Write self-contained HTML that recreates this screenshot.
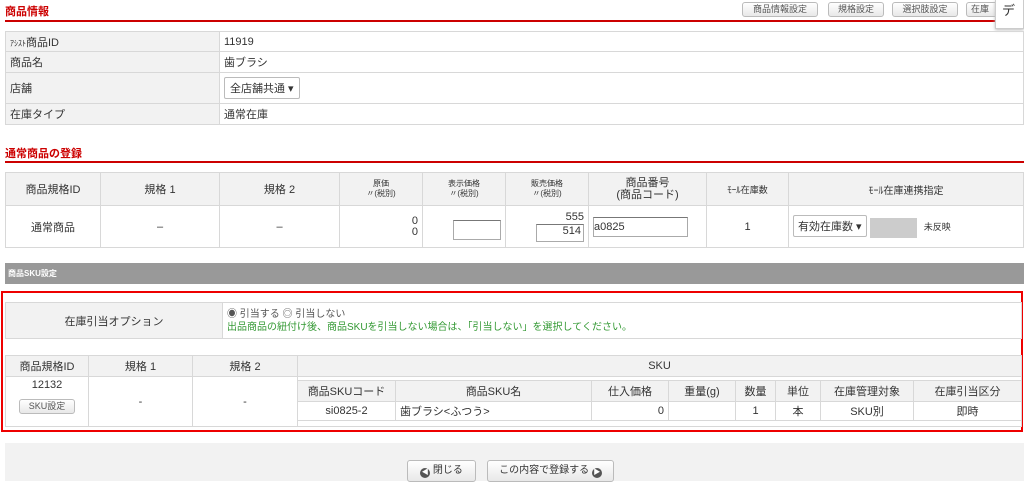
<!DOCTYPE html>
<html><head><meta charset="utf-8"><style>
*{box-sizing:border-box;margin:0;padding:0}
body{width:1024px;height:481px;overflow:hidden;background:#fff;font-family:"Liberation Sans","Noto Sans CJK JP",sans-serif;font-size:11px;color:#333;position:relative}
.a{position:absolute}
.h{color:#c00;font-weight:bold;font-size:11px}
.rl{height:2px;background:#c00}
table{border-collapse:collapse;table-layout:fixed;position:absolute}
td,th{border:1px solid #d8d8d8;font-weight:normal;padding:0 4px;overflow:hidden;white-space:nowrap}
th{background:#f2f2f2}
.btn{position:absolute;border:1px solid #bbb;border-radius:3px;background:linear-gradient(#fff,#e8e8e8);font-size:9px;color:#555;text-align:center;line-height:13px}
.inp{display:inline-block;border:1px solid #aaa;border-top-color:#777;background:#fff}
.c{text-align:center}.r{text-align:right}
</style></head><body>
<div class="a h" style="left:5px;top:3px">商品情報</div>
<div class="a rl" style="left:5px;top:20px;width:1019px"></div>
<div class="btn" style="left:742px;top:2px;width:76px;height:15px">商品情報設定</div>
<div class="btn" style="left:828px;top:2px;width:56px;height:15px">規格設定</div>
<div class="btn" style="left:892px;top:2px;width:66px;height:15px">選択肢設定</div>
<div class="btn" style="left:966px;top:2px;width:40px;height:15px;text-align:left;padding-left:4px">在庫</div>
<div class="a" style="left:995px;top:0;width:29px;height:29px;background:#fff;border:1px solid #ccc;border-top:none;box-shadow:0 1px 3px #bbb;font-size:13px;padding:0 0 0 6px">デ</div>

<table style="left:5px;top:31px;width:1019px">
<col style="width:214px"><col>
<tr style="height:20px"><th style="text-align:left"><span style="font-size:8px">ｱｼｽﾄ</span>商品ID</th><td>11919</td></tr>
<tr style="height:21px"><th style="text-align:left">商品名</th><td>歯ブラシ</td></tr>
<tr style="height:31px"><th style="text-align:left">店舗</th><td><span class="inp" style="border-radius:2px;padding:2px 5px;border-color:#bbb">全店舗共通 ▾</span></td></tr>
<tr style="height:21px"><th style="text-align:left">在庫タイプ</th><td>通常在庫</td></tr>
</table>

<div class="a h" style="left:5px;top:145px">通常商品の登録</div>
<div class="a rl" style="left:5px;top:161px;width:1019px"></div>

<table style="left:5px;top:172px;width:1019px">
<col style="width:95px"><col style="width:119px"><col style="width:120px"><col style="width:83px"><col style="width:83px"><col style="width:83px"><col style="width:118px"><col style="width:82px"><col>
<tr style="height:33px"><th>商品規格ID</th><th>規格 1</th><th>規格 2</th><th style="font-size:8px;line-height:10px">原価<br>〃(税別)</th><th style="font-size:8px;line-height:10px">表示価格<br>〃(税別)</th><th style="font-size:8px;line-height:10px">販売価格<br>〃(税別)</th><th style="line-height:12px">商品番号<br>(商品コード)</th><th style="font-size:9px">ﾓｰﾙ在庫数</th><th style="font-size:10px">ﾓｰﾙ在庫連携指定</th></tr>
<tr style="height:42px"><td class="c">通常商品</td><td class="c">–</td><td class="c">–</td><td class="r" style="line-height:11px">0<br>0</td><td class="r"><span class="inp" style="width:48px;height:20px;margin-top:10px"></span></td><td class="r" style="line-height:13px">555<br><span class="inp" style="width:48px;height:18px;text-align:right;padding-right:2px">514</span></td><td><span class="inp" style="width:95px;height:20px;padding:3px 0 0 0">a0825</span></td><td class="c">1</td><td><span class="inp" style="border-color:#bbb;border-radius:2px;padding:2px 4px">有効在庫数 ▾</span> <span class="inp" style="width:47px;height:20px;background:#ccc;border-color:#ccc;vertical-align:middle"></span> <span style="font-size:9px;margin-left:4px">未反映</span></td></tr>
</table>

<div class="a" style="left:5px;top:263px;width:1019px;height:21px;background:#999;color:#fff;font-size:8px;font-weight:bold;line-height:21px;padding-left:3px">商品SKU設定</div>
<div class="a" style="left:1px;top:291px;width:1022px;height:141px;border:2px solid #e00"></div>

<table style="left:5px;top:302px;width:1017px">
<col style="width:217px"><col>
<tr style="height:36px"><th class="c">在庫引当オプション</th><td style="line-height:12px"><span style="font-size:10px;color:#555">◉ 引当する ◎ 引当しない</span><br><span style="color:#393;font-size:10px">出品商品の紐付け後、商品SKUを引当しない場合は、「引当しない」を選択してください。</span></td></tr>
</table>

<table style="left:5px;top:355px;width:1017px">
<col style="width:83px"><col style="width:104px"><col style="width:105px"><col>
<tr style="height:21px"><th class="c">商品規格ID</th><th class="c">規格 1</th><th class="c">規格 2</th><th class="c">SKU</th></tr>
<tr style="height:50px"><td class="c" style="vertical-align:top;padding-top:2px">12132<br><span class="btn" style="position:relative;display:inline-block;width:56px;height:15px;margin-top:8px">SKU設定</span></td><td class="c">-</td><td class="c">-</td><td></td></tr>
</table>

<table style="left:297px;top:380px;width:725px;font-size:11px">
<col style="width:98px"><col style="width:196px"><col style="width:77px"><col style="width:67px"><col style="width:40px"><col style="width:45px"><col style="width:93px"><col>
<tr style="height:21px"><th class="c">商品SKUコード</th><th class="c">商品SKU名</th><th class="c">仕入価格</th><th class="c">重量(g)</th><th class="c">数量</th><th class="c">単位</th><th class="c">在庫管理対象</th><th class="c">在庫引当区分</th></tr>
<tr style="height:19px"><td class="c">si0825-2</td><td>歯ブラシ&lt;ふつう&gt;</td><td class="r">0</td><td></td><td class="c">1</td><td class="c">本</td><td class="c">SKU別</td><td class="c">即時</td></tr>
</table>

<div class="a" style="left:5px;top:443px;width:1019px;height:38px;background:#f2f2f2"></div>
<div class="btn" style="left:407px;top:460px;width:69px;height:22px;line-height:20px;font-size:10px;color:#333"><span style="display:inline-block;width:10px;height:10px;border-radius:50%;background:#555;color:#fff;font-size:7px;line-height:10px;vertical-align:-1px">◀</span> 閉じる</div>
<div class="btn" style="left:487px;top:460px;width:127px;height:22px;line-height:20px;font-size:10px;color:#333">この内容で登録する <span style="display:inline-block;width:10px;height:10px;border-radius:50%;background:#555;color:#fff;font-size:7px;line-height:10px;vertical-align:-1px">▶</span></div>
</body></html>
